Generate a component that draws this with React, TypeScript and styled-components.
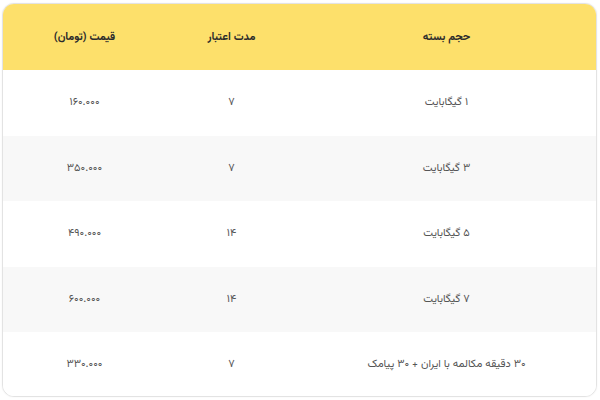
import React from "react";
import styled, { createGlobalStyle } from "styled-components";

const Global = createGlobalStyle`
  html, body { margin: 0; padding: 0; background: #ffffff; }
  body { font-family: "Vazirmatn", "Noto Sans Arabic", "DejaVu Sans", sans-serif; }
`;

const Page = styled.div`
  width: 600px;
  height: 400px;
  box-sizing: border-box;
  padding: 3px 3px 3px 2px;
`;

const Card = styled.div`
  height: 100%;
  box-sizing: border-box;
  border: 1px solid #e3e3e3;
  border-radius: 12px;
  overflow: hidden;
  background: #ffffff;
  box-shadow: 0 0 2px rgba(0, 0, 0, 0.06);
`;

const Table = styled.table`
  direction: rtl;
  width: 100%;
  height: 100%;
  border-collapse: collapse;
  table-layout: fixed;
`;

const HeadRow = styled.tr`
  background: #fde06b;
  height: 66px;
`;

const Th = styled.th<{ $w: number }>`
  width: ${(p) => p.$w}px;
  font-size: 11px;
  font-weight: 700;
  color: #2b2b2b;
  text-align: center;
  vertical-align: middle;
  padding: 0;
`;

const Row = styled.tr<{ $alt: boolean }>`
  background: ${(p) => (p.$alt ? "#f8f8f8" : "#ffffff")};
  height: 65.5px;
`;

const Td = styled.td`
  font-size: 11px;
  color: #555555;
  text-align: center;
  vertical-align: middle;
  padding: 0;
`;

const rows = [
  { size: "۱ گیگابایت", days: "۷", price: "۱۶۰.۰۰۰" },
  { size: "۳ گیگابایت", days: "۷", price: "۳۵۰.۰۰۰" },
  { size: "۵ گیگابایت", days: "۱۴", price: "۴۹۰.۰۰۰" },
  { size: "۷ گیگابایت", days: "۱۴", price: "۶۰۰.۰۰۰" },
  { size: "۳۰ دقیقه مکالمه با ایران + ۳۰ پیامک", days: "۷", price: "۳۳۰.۰۰۰" },
];

export default function App() {
  return (
    <>
      <Global />
      <Page>
        <Card>
          <Table>
            <thead>
              <HeadRow>
                <Th $w={299}>حجم بسته</Th>
                <Th $w={131}>مدت اعتبار</Th>
                <Th $w={163}>قیمت (تومان)</Th>
              </HeadRow>
            </thead>
            <tbody>
              {rows.map((r, i) => (
                <Row key={i} $alt={i % 2 === 1}>
                  <Td>{r.size}</Td>
                  <Td>{r.days}</Td>
                  <Td>{r.price}</Td>
                </Row>
              ))}
            </tbody>
          </Table>
        </Card>
      </Page>
    </>
  );
}
